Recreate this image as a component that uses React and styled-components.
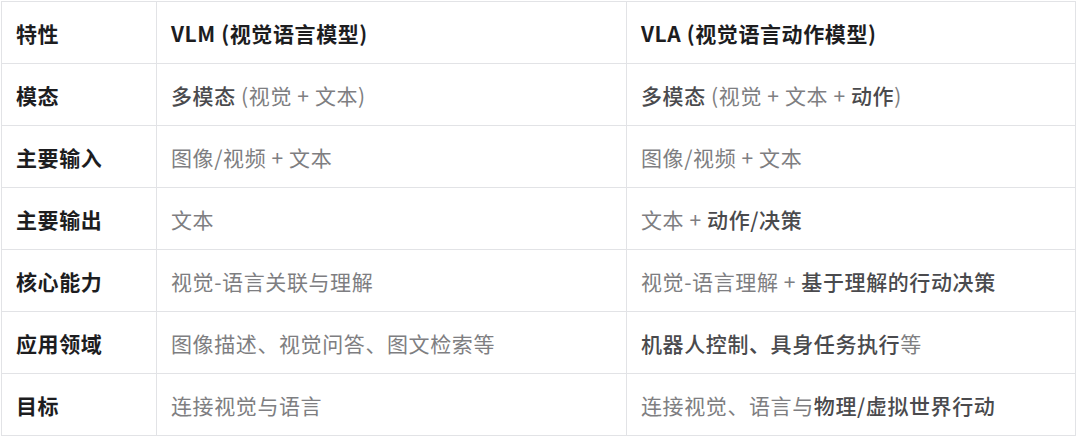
import React from "react";
import styled, { createGlobalStyle } from "styled-components";

const GlobalStyle = createGlobalStyle`
  body {
    margin: 0;
    background: #ffffff;
    font-family: "Noto Sans CJK SC", "Noto Sans", sans-serif;
  }
`;

const Wrapper = styled.div`
  padding: 1px 4px 0 1px;
`;

const Table = styled.table`
  width: 1075px;
  border-collapse: collapse;
  table-layout: fixed;
  font-size: 21px;
  letter-spacing: 0.6px;
`;

const Th = styled.th`
  height: 61px;
  padding: 0 0 0 14px;
  border: 1px solid #e2e3e6;
  text-align: left;
  font-weight: 700;
  color: #1d1d1f;
`;

const Label = styled.td`
  height: 61px;
  padding: 0 0 0 14px;
  border: 1px solid #e2e3e6;
  font-weight: 700;
  color: #1d1d1f;
`;

const Cell = styled.td`
  height: 61px;
  padding: 0 0 0 14px;
  border: 1px solid #e2e3e6;
  color: #7e7e81;
`;

const B = styled.strong`
  font-weight: 500;
  color: #4a4a4d;
`;

const rows = [
  {
    label: "模态",
    vlm: [<B key="a">多模态</B>, " (视觉 + 文本)"],
    vla: [<B key="a">多模态</B>, " (视觉 + 文本 + ", <B key="b">动作</B>, ")"],
  },
  {
    label: "主要输入",
    vlm: ["图像/视频 + 文本"],
    vla: ["图像/视频 + 文本"],
  },
  {
    label: "主要输出",
    vlm: ["文本"],
    vla: ["文本 + ", <B key="a">动作/决策</B>],
  },
  {
    label: "核心能力",
    vlm: ["视觉-语言关联与理解"],
    vla: ["视觉-语言理解 + ", <B key="a">基于理解的行动决策</B>],
  },
  {
    label: "应用领域",
    vlm: ["图像描述、视觉问答、图文检索等"],
    vla: [<B key="a">机器人控制、具身任务执行</B>, "等"],
  },
  {
    label: "目标",
    vlm: ["连接视觉与语言"],
    vla: ["连接视觉、语言与", <B key="a">物理/虚拟世界行动</B>],
  },
];

const App = () => {
  return (
    <>
      <GlobalStyle />
      <Wrapper>
        <Table>
          <colgroup>
            <col style={{ width: 155 }} />
            <col style={{ width: 470 }} />
            <col />
          </colgroup>
          <thead>
            <tr>
              <Th>特性</Th>
              <Th>VLM (视觉语言模型)</Th>
              <Th>VLA (视觉语言动作模型)</Th>
            </tr>
          </thead>
          <tbody>
            {rows.map((row) => (
              <tr key={row.label}>
                <Label>{row.label}</Label>
                <Cell>{row.vlm}</Cell>
                <Cell>{row.vla}</Cell>
              </tr>
            ))}
          </tbody>
        </Table>
      </Wrapper>
    </>
  );
};

export default App;
